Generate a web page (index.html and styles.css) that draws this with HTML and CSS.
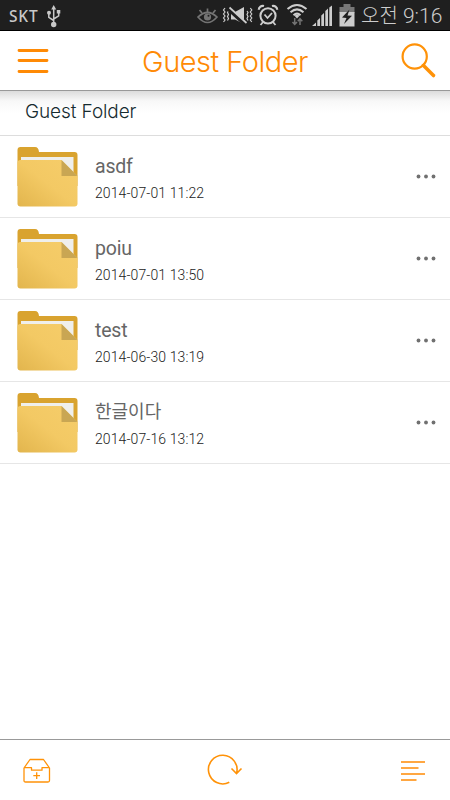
FILE: index.html
```html
<!DOCTYPE html>
<html lang="ko">
<head>
<meta charset="utf-8">
<title>Guest Folder</title>
<link rel="stylesheet" href="styles.css">
</head>
<body>
<svg width="0" height="0" class="defs">
  <defs>
    <linearGradient id="front" x1="1" y1="0" x2="0" y2="1">
      <stop offset="0" stop-color="#f6cd6a"/><stop offset=".5" stop-color="#f3c964"/><stop offset="1" stop-color="#e2b54d"/>
    </linearGradient>
    <symbol id="folder" viewBox="0 0 61 61">
      <path d="M.5 4Q.5 1 3.500 1H18Q21.500 1 22 6H57.500Q60.500 6 60.500 9V40H.5Z" fill="#d9a32f"/>
      <path d="M4 11H56.500V34H4Z" fill="#efefec"/>
      <path d="M.5 17Q.5 14 3.500 14H44.500L60.500 30V57.500Q60.500 60.500 57.500 60.500H3.500Q.5 60.500 .5 57.500Z" fill="url(#front)"/>
      <path d="M44.500 14V30H60.500Z" fill="#c9a653"/>
    </symbol>
    <symbol id="dots" viewBox="0 0 20 5">
      <g fill="#707070"><circle cx="2.500" cy="2.500" r="1.900"/><circle cx="10" cy="2.500" r="1.900"/><circle cx="17.500" cy="2.500" r="1.900"/></g>
    </symbol>
  </defs>
</svg>
<div class="app">
  <div class="status">
    <span class="carrier">SKT</span>
    <svg class="usb" width="14" height="23" viewBox="0 0 14 23" fill="none" stroke="#c9c9c9" stroke-width="1.500">
      <path d="M6.700 3V19M1.800 8V12.300L6.700 15.500M11.700 7.500V10.800L6.700 14"/>
      <path d="M4.200 4.500L6.700 0L9.200 4.500Z" fill="#c9c9c9" stroke="none"/>
      <circle cx="6.700" cy="19.500" r="2.700" fill="#c9c9c9" stroke="none"/>
      <circle cx="2" cy="7.800" r="2" fill="#c9c9c9" stroke="none"/>
      <path d="M9.800 5H13.300V8.500H9.800Z" fill="#c9c9c9" stroke="none"/>
    </svg>
    <svg class="tray" width="160" height="30" viewBox="197 0 160 30" fill="none" stroke="#cdcdcd">
      <g stroke="#747474" stroke-width="1.700">
        <path d="M198 17Q207.500 8 217 17Q207.500 28 198 17Z"/>
        <circle cx="207.500" cy="17" r="3.600" fill="#747474" stroke="none"/>
        <path d="M207.500 12V8.500M202 13L199.500 10M213 13L215.500 10"/>
        <circle cx="208.500" cy="15.700" r="1" fill="#1f1f1f" stroke="none"/>
      </g>
      <path d="M225 8l-1.500 2l1.500 2l-1.500 2l1.500 2l-1.500 2l1.500 2l-1.500 2M228.500 11l-1 1.500l1 2l-1 2l1 2l-1 2" stroke-width="1.200"/>
      <path d="M247 11l1 1.500l-1 2l1 2l-1 2l1 2M250.300 8l1.500 2l-1.500 2l1.500 2l-1.500 2l1.500 2l-1.500 2l1.500 2" stroke-width="1.200"/>
      <path d="M231 12H235L244 7V24L235 19.500H231Z" fill="#cdcdcd" stroke="none"/>
      <path d="M228 8.500L246 25" stroke="#1f1f1f" stroke-width="4"/>
      <path d="M229.500 7.500L246.500 23" stroke-width="1.700"/>
      <circle cx="268" cy="15.800" r="7.600" stroke-width="2"/>
      <path d="M264.500 14.500L267.500 18L272 13M263 22L260.500 25M273 22L275.500 25" stroke-width="1.800"/>
      <path d="M258.800 9.800A4 4 0 0 1 264 6M277.200 9.800A4 4 0 0 0 272 6" stroke-width="2.200"/>
      <path d="M287.500 9Q297 1 306.500 9M290.500 12.200Q297 6.500 303.500 12.200M293.500 15.200Q297 12 300.500 15.200" stroke-width="2"/>
      <path d="M294.500 15.800Q297 13.500 299.500 15.800L297 18.500Z" fill="#cdcdcd" stroke="none"/>
      <path d="M294.700 18V24M292.500 22L294.700 24.500L297 22M300 25V19M297.800 21.200L300 18.700L302.300 21.200" stroke="#747474" stroke-width="1.500"/>
      <path d="M312 26L316 22.500V26ZM317.300 26V20.500L320 18V26ZM321.300 26V15.500L324 13V26ZM325.300 26V11L328 8.500V26ZM329.300 26V7.500L332 5.500V26Z" fill="#cdcdcd" stroke="none"/>
      <path d="M343.500 4H350.500V7H354.500V13H339.500V7H343.500Z" fill="#777" stroke="none"/>
      <path d="M339.500 12H354.500V26.500H339.500Z" fill="#cdcdcd" stroke="none"/>
      <path d="M349.500 9.500L342 17.500L346.500 18L344 24L352 15.800L347.500 15.500Z" fill="#1f1f1f" stroke="none"/>
    </svg>
    <span class="clock"><span class="ampm">오전</span> 9:16</span>
  </div>
  <header class="header">
    <svg width="32" height="26" viewBox="0 0 32 26" stroke="#ff8a05" stroke-width="2.800" stroke-linecap="round"><path d="M2 2.500H30M2 12.500H30M2 23.500H30"/></svg>
    <h1 class="title">Guest Folder</h1>
    <svg width="36" height="36" viewBox="0 0 36 36" fill="none" stroke="#ff9208"><circle cx="13.700" cy="13.500" r="12.100" stroke-width="2.200"/><path d="M22.500 22.500L32.500 32.500" stroke-width="3.600" stroke-linecap="round"/></svg>
  </header>
  <div class="crumb"><span>Guest Folder</span></div>
  <main class="list">
    <div class="row">
      <svg class="folder"><use href="#folder"/></svg>
      <div class="info"><div class="name">asdf</div><div class="date">2014-07-01 11:22</div></div>
      <svg class="more"><use href="#dots"/></svg>
    </div>
    <div class="row">
      <svg class="folder"><use href="#folder"/></svg>
      <div class="info"><div class="name">poiu</div><div class="date">2014-07-01 13:50</div></div>
      <svg class="more"><use href="#dots"/></svg>
    </div>
    <div class="row">
      <svg class="folder"><use href="#folder"/></svg>
      <div class="info"><div class="name">test</div><div class="date">2014-06-30 13:19</div></div>
      <svg class="more"><use href="#dots"/></svg>
    </div>
    <div class="row">
      <svg class="folder"><use href="#folder"/></svg>
      <div class="info"><div class="name korean">한글이다</div><div class="date">2014-07-16 13:12</div></div>
      <svg class="more"><use href="#dots"/></svg>
    </div>
  </main>
  <footer class="footer">
    <svg width="28" height="26" viewBox="0 0 28 26" fill="none" stroke="#ff9208" stroke-width="1.300" stroke-linejoin="round"><path d="M1 10L7 1.500H20.500L26.500 10V22.500Q26.500 24 25 24H2.500Q1 24 1 22.500ZM1 9.700H8.500V12.200H19V9.700H26.500M13.700 14.300V21M10.300 17.700H17"/></svg>
    <svg class="reload" width="36" height="32" viewBox="0 0 36 32" fill="none" stroke="#ff9208" stroke-width="1.600"><path d="M22.300 28.300A14.300 14.300 0 1 1 29.500 19.500M24.500 14.500L29.500 19.500L34.500 14.500"/></svg>
    <svg width="24" height="20" viewBox="0 0 24 20" stroke="#ff8a05" stroke-width="1.300"><path d="M0 1H24M0 7H17.500M0 13H24M0 19H15.500"/></svg>
  </footer>
</div>
</body>
</html>
```
FILE: styles.css
```css
* { box-sizing: border-box; }
body { margin: 0; font-family: Roboto, "Noto Sans CJK KR", sans-serif; background: #fff; }
svg { flex: none; display: block; }
.defs { position: absolute; }
.app { width: 450px; height: 800px; display: flex; flex-direction: column; overflow: hidden; }
.status { height: 31px; flex: none; display: flex; align-items: flex-start; background: #1f1f1f; border-bottom: 1px solid #000; padding-left: 9px; color: #cdcdcd; }
.carrier { width: 38px; font: 500 15.500px/32px "Noto Sans", sans-serif; letter-spacing: .8px; color: #c8c8c8; }
.usb { margin-top: 5px; }
.tray { margin-left: 136px; }
.clock { margin-left: 4px; font-size: 21px; line-height: 32px; font-weight: 300; white-space: nowrap; }
.ampm { font-size: 20px; }
.header { height: 60px; flex: none; display: flex; align-items: center; justify-content: space-between; padding: 1px 13px 0 17px; border-bottom: 1px solid #999; }
.title { margin: 2px 0 0; font: 300 29px/40px Inter, sans-serif; letter-spacing: -.5px; color: #ff8a05; white-space: nowrap; }
.crumb { height: 45px; flex: none; padding: 0 25px; border-bottom: 1px solid #ddd; background: linear-gradient(#dcdcdc, #f8f8f8 10px, #fff 22px); font: 300 19px/41px Inter, sans-serif; color: #162b30; letter-spacing: -.1px; }
.list { flex: 1; }
.row { height: 82px; display: flex; padding: 10px 14px 0 17px; border-bottom: 1px solid #e6e6e6; }
.folder { width: 61px; height: 61px; }
.info { margin-left: 17px; flex: 1; }
.name { font-size: 19.500px; font-weight: 400; line-height: 26px; margin-top: 8px; color: #666; letter-spacing: -.2px; }
.korean { font-size: 18px; line-height: 24px; margin-bottom: 6px; letter-spacing: 0; }
.date { font-size: 14px; font-weight: 300; line-height: 18px; margin-top: 4px; color: #222; letter-spacing: .1px; }
.more { width: 20px; height: 5px; margin-top: 28px; }
.footer { height: 61px; flex: none; display: flex; align-items: center; justify-content: space-between; padding: 1px 25px 0 23px; border-top: 1px solid #999; }
.reload { margin: 0 3px 1px 0; }
```
